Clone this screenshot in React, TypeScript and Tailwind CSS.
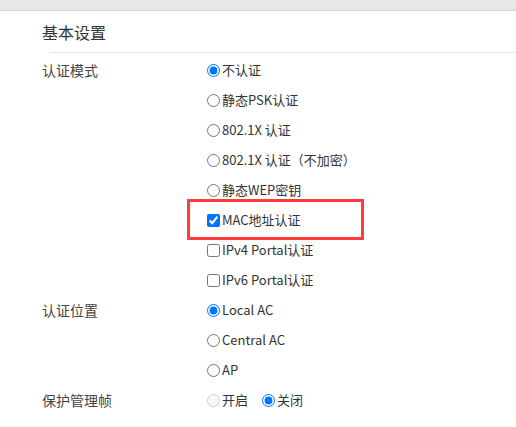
import React from "react";

type Opt = { label: string; kind: "radio" | "checkbox"; checked?: boolean; disabled?: boolean };

const modes: Opt[] = [
  { label: "不认证", kind: "radio", checked: true },
  { label: "静态PSK认证", kind: "radio" },
  { label: "802.1X 认证", kind: "radio" },
  { label: "802.1X 认证（不加密）", kind: "radio" },
  { label: "静态WEP密钥", kind: "radio" },
  { label: "MAC地址认证", kind: "checkbox", checked: true },
  { label: "IPv4 Portal认证", kind: "checkbox" },
  { label: "IPv6 Portal认证", kind: "checkbox" },
];

const places: Opt[] = [
  { label: "Local AC", kind: "radio", checked: true },
  { label: "Central AC", kind: "radio" },
  { label: "AP", kind: "radio" },
];

function Control({ opt, name }: { opt: Opt; name: string }) {
  return (
    <label className="flex items-center gap-[2px] text-[13px] text-[#333]">
      <input
        type={opt.kind}
        name={name}
        defaultChecked={opt.checked}
        disabled={opt.disabled}
        className="m-0 h-[13px] w-[13px] accent-[#0075ff]"
      />
      <span>{opt.label}</span>
    </label>
  );
}

function Row({ label, children, highlight }: { label?: string; children: React.ReactNode; highlight?: boolean }) {
  return (
    <div className="flex h-[30px] items-center">
      <div className="w-[207px] shrink-0 pl-[42px] text-[14px] text-[#444]">{label}</div>
      <div className="relative flex h-full items-center gap-[14px]">
        {children}
        {highlight && (
          <div className="pointer-events-none absolute left-[-20px] top-[-6px] h-[41px] w-[177px] border-[3px] border-[#ff3b3b]" />
        )}
      </div>
    </div>
  );
}

export default function App() {
  return (
    <div
      className="h-[427px] w-[516px] overflow-hidden bg-white"
      style={{ fontFamily: '"Noto Sans CJK SC", "Noto Sans", sans-serif' }}
    >
      <div className="h-[11px] border-b border-[#d6d6d6] bg-[#e6e7e9]" />
      <div className="flex h-[41px] items-center pl-[42px] text-[16px] text-[#333]">基本设置</div>
      <div className="ml-[50px] h-px bg-[#e8e8e8]" />
      <div className="pt-[2px]">
        {modes.map((m, i) => (
          <Row key={m.label} label={i === 0 ? "认证模式" : undefined} highlight={m.label === "MAC地址认证"}>
            <Control opt={m} name="mode" />
          </Row>
        ))}
        {places.map((p, i) => (
          <Row key={p.label} label={i === 0 ? "认证位置" : undefined}>
            <Control opt={p} name="place" />
          </Row>
        ))}
        <Row label="保护管理帧">
          <Control opt={{ label: "开启", kind: "radio", disabled: true }} name="pmf" />
          <Control opt={{ label: "关闭", kind: "radio", checked: true }} name="pmf" />
        </Row>
      </div>
    </div>
  );
}
